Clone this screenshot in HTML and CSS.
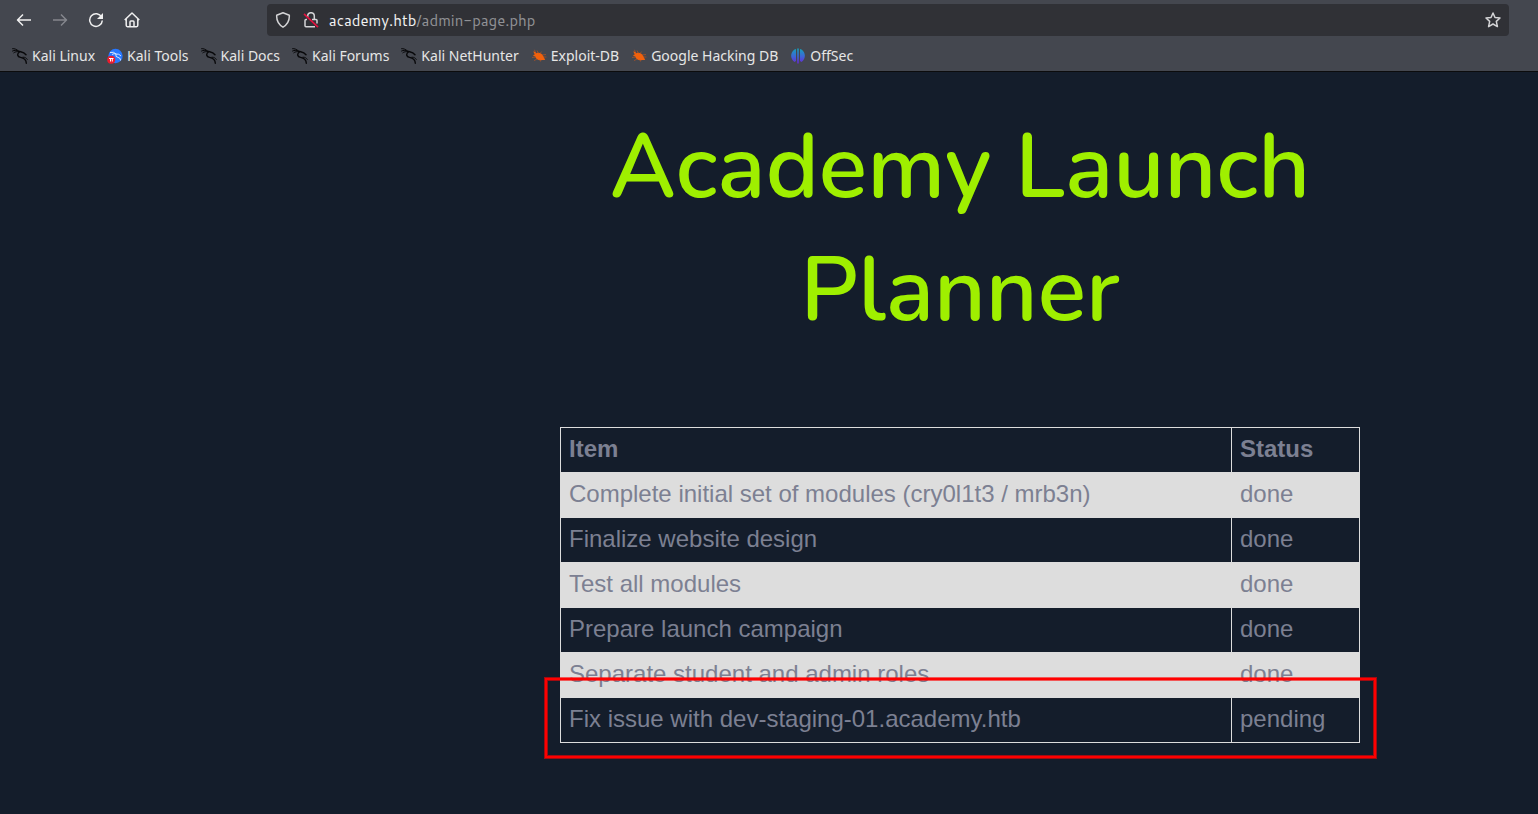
FILE: index.html
```html
<!DOCTYPE html>
<html lang="en">
<head>
<meta charset="utf-8">
<title>Academy Launch Planner</title>
<link rel="stylesheet" href="styles.css">
</head>
<body>
<svg class="defs" aria-hidden="true">
  <symbol id="dragon" viewBox="0 0 16 16">
    <path d="M.2.700C2.500.4 4.500 1.300 6.500 3M.2 3.200C2.500 1.800 5 2.400 7 3.600M1.500 5C3.200 3.600 5.200 3.400 7 4" fill="none" stroke="#08080a" stroke-width="1"/>
    <path d="M6.500 3.200C9 4.200 11.500 3.600 14 6.800M7.500 4C4.600 6 5.400 8.800 8.500 9.400 11.800 10 14.200 11.800 14.300 15.300" fill="none" stroke="#08080a" stroke-width="1.400" stroke-linecap="round"/>
    <path d="M10.500 9.200C13 9 14.600 10 15.500 11.800" fill="none" stroke="#08080a" stroke-width=".9"/>
  </symbol>
  <symbol id="bug" viewBox="0 0 16 16">
    <path d="M2.300 3.600C4 3.400 5 4.600 5.500 5.200 8 3.900 11.300 5.600 12.500 8.500L14.200 12 11.300 11.900C8.500 13 5 11.800 4.400 8.800L1.800 7.300 3.800 6.500Z" fill="#f2610c"/>
    <path d="M5 6 3.500 1.800M7.500 5.500 6 2.500M9 5.600 10.600 3.600M11 7 15 6.500M5 9 1 9.500M6 11 3 12.600M9 11.500 9.500 13.500M12 9 15.500 9" stroke="#c9561a" stroke-width=".6" fill="none"/>
  </symbol>
</svg>
<header class="browser">
  <nav class="toolbar" aria-label="Browser controls">
    <div class="controls">
      <button class="tool" aria-label="Back"><svg viewBox="0 0 16 16"><path d="M15 8H2M7 2.500 1.500 8 7 13.500"/></svg></button>
      <button class="tool" aria-label="Forward" disabled><svg viewBox="0 0 16 16"><path d="M1 8h13M9 2.500 14.500 8 9 13.500"/></svg></button>
      <button class="tool" aria-label="Reload"><svg viewBox="0 0 16 16"><path d="M13.600 5.200A6.300 6.300 0 1 0 14.300 8.500"/><path class="solid" d="M15 1v6H9z"/></svg></button>
      <button class="tool" aria-label="Home"><svg viewBox="0 0 16 16"><path d="M.7 8 8 1 15.300 8M2.200 7v6.300q0 1.400 1.300 1.400h9q1.300 0 1.300-1.400V7M6 14.500V10q0-.9.900-.9h2.200q.9 0 .9.900v4.500"/></svg></button>
    </div>
    <div class="address">
      <button class="tool" aria-label="Tracking protection"><svg viewBox="0 0 16 16"><path d="M8 .8 14.300 3.200Q14.800 11 8 15.200 1.200 11 1.700 3.200Z"/></svg></button>
      <button class="tool lock" aria-label="Connection not secure"><svg viewBox="0 0 16 16"><path d="M4.700 5V4a3.300 3.300 0 0 1 6.600 0v3.500M9 7.500h4q1 0 1 1v3M12 14.700H3q-1 0-1-1V8.500q0-1 1-1h1"/><path class="slash" d="M1 1.800 15 15.200"/></svg></button>
      <a class="url" href="#">academy.htb<span class="path">/admin-page.php</span></a>
      <button class="tool" aria-label="Bookmark this page"><svg viewBox="0 0 16 16"><path d="M8 1 10 5.500 15 6 11.300 9.400 12.400 14.600 8 12 3.600 14.600 4.700 9.400 1 6 6 5.500Z"/></svg></button>
    </div>
  </nav>
  <nav class="bookmarks" aria-label="Bookmarks">
    <a href="#"><svg><use href="#dragon"/></svg>Kali Linux</a>
    <a href="#"><svg viewBox="0 0 16 16"><circle cx="8.500" cy="8" r="7.200" fill="#2777ff"/><path d="M3 4.500Q7 3.400 9 6 12 5.500 14 8M5 6.500Q7 5 9 6 8 9 11 9.400 14 10 13.500 12.500" fill="none" stroke="#d5e5ff"/><circle cx="4.200" cy="11.800" r="4" fill="#ec1c2e"/><path d="M2 10.500h4.500M3.500 10.500v3M5.300 10.500v3" stroke="#fff" fill="none"/></svg>Kali Tools</a>
    <a href="#"><svg><use href="#dragon"/></svg>Kali Docs</a>
    <a href="#"><svg><use href="#dragon"/></svg>Kali Forums</a>
    <a href="#"><svg><use href="#dragon"/></svg>Kali NetHunter</a>
    <a href="#"><svg><use href="#bug"/></svg>Exploit-DB</a>
    <a href="#"><svg><use href="#bug"/></svg>Google Hacking DB</a>
    <a href="#"><svg viewBox="0 0 16 16"><defs><linearGradient id="off" gradientUnits="userSpaceOnUse" x1="0" y1="0" x2="0" y2="16"><stop stop-color="#12a5b8"/><stop offset=".55" stop-color="#3f63d8"/><stop offset="1" stop-color="#6a22d0"/></linearGradient></defs><path d="M6 1V13L4.500 14A7.500 7.500 0 0 1 4.500 1.500ZM7.200.4h1.600v15.200H7.200ZM10 1 11.500 1.500A7.500 7.500 0 0 1 11.500 14L10 13Z" fill="url(#off)"/></svg>OffSec</a>
  </nav>
</header>
<main class="page">
  <h1>Academy Launch Planner</h1>
  <div class="planner">
    <table>
      <thead><tr><th scope="col">Item</th><th scope="col" class="status">Status</th></tr></thead>
      <tbody>
        <tr><td>Complete initial set of modules (cry0l1t3 / mrb3n)</td><td>done</td></tr>
        <tr><td>Finalize website design</td><td>done</td></tr>
        <tr><td>Test all modules</td><td>done</td></tr>
        <tr><td>Prepare launch campaign</td><td>done</td></tr>
        <tr><td>Separate student and admin roles</td><td>done</td></tr>
        <tr><td>Fix issue with dev-staging-01.academy.htb</td><td>pending</td></tr>
      </tbody>
    </table>
    <div class="highlight"></div>
  </div>
</main>
</body>
</html>
```
FILE: styles.css
```css
* { box-sizing: border-box; }
body {
  margin: 0;
  min-height: 100vh;
  background: #141d2b;
  font-family: "Noto Sans", sans-serif;
}
.defs { position: absolute; width: 0; height: 0; }

.browser {
  background: #44474f;
  border-bottom: 1px solid #0c0c0d;
  color: #e6e6e6;
  font-size: 14px;
}
.toolbar {
  display: flex;
  justify-content: space-between;
  padding: 4px 29px 4px 16px;
}
.controls { display: flex; align-items: center; gap: 20px; }
.tool {
  display: flex;
  padding: 0;
  border: 0;
  background: none;
  color: #f0f0f0;
}
.tool:disabled { color: #85878d; }
.tool svg {
  width: 16px;
  height: 16px;
  fill: none;
  stroke: currentColor;
  stroke-width: 1.5;
  stroke-linejoin: round;
}
.tool .solid { fill: currentColor; stroke: none; }
.tool .slash { stroke: #e3123f; stroke-width: 1.6; }
.address {
  display: flex;
  align-items: center;
  gap: 10px;
  width: 83.2%;
  height: 32px;
  padding: 0 8px;
  border-radius: 4px;
  background: #303136;
}
.address .tool { color: #d4d4d6; }
.address .lock { margin-left: 2px; }
.url {
  flex: 1;
  font-family: Cantarell, "Noto Sans", sans-serif;
  font-size: 15px;
  color: #f2f2f2;
  text-decoration: none;
}
.path { color: #909195; }
.bookmarks {
  display: flex;
  gap: 12px;
  padding: 4px 12px 3px;
}
.bookmarks a {
  display: flex;
  align-items: center;
  gap: 4px;
  line-height: 24px;
  color: inherit;
  text-decoration: none;
  white-space: nowrap;
}
.bookmarks svg { width: 16px; height: 16px; }

.page {
  display: flex;
  flex-direction: column;
  align-items: center;
  padding: 34px 0 56px 382px;
}
h1 {
  max-width: 800px;
  margin: 0 0 75px;
  color: #9fef00;
  font-family: Nunito, "Open Sans", sans-serif;
  font-size: 90px;
  font-weight: 600;
  line-height: 123px;
  text-align: center;
}
.planner {
  position: relative;
  width: 100%;
  max-width: 800px;
}
table {
  width: 100%;
  border-collapse: collapse;
  color: #7c8092;
  font-family: "Liberation Sans", Arial, sans-serif;
  font-size: 24px;
  line-height: 28px;
}
th, td {
  padding: 7px 8px 9px;
  border: 1px solid #ddd;
  text-align: left;
}
.status { width: 128px; }
tbody tr:nth-child(odd) { background: #ddd; }
.highlight {
  position: absolute;
  right: -16px;
  bottom: -15px;
  left: -15px;
  height: 80px;
  border: 2px solid #f00;
  box-shadow: 0 0 0 1px rgba(255, 0, 0, .6), inset 0 0 0 1px rgba(255, 0, 0, .6);
  pointer-events: none;
}
```
